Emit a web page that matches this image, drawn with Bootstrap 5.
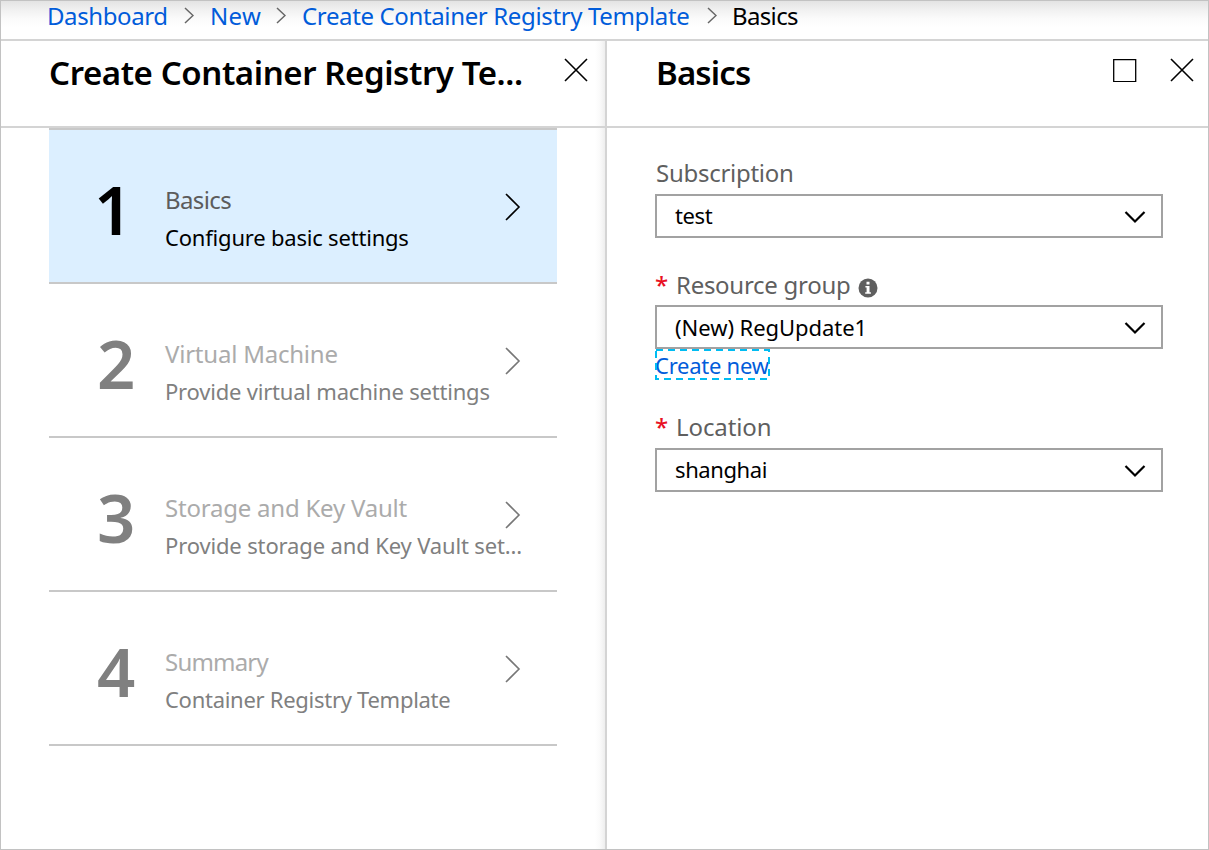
<!DOCTYPE html>
<html lang="en">
<head>
<meta charset="utf-8">
<meta name="viewport" content="width=device-width, initial-scale=1">
<title>Create Container Registry Template</title>
<link rel="stylesheet" href="https://cdn.jsdelivr.net/npm/bootstrap@5.3.0/dist/css/bootstrap.min.css">
<style>
body{font-family:"Noto Sans",sans-serif;color:#000;background:#fff}
svg{display:block;flex:none;fill:none;stroke:#000}
a,a:hover{color:#015cda;text-decoration:none}
.portal{height:850px;border:1px solid #c2c2c2}
.crumbs{height:40px;border-bottom:2px solid #d4d4d4;padding-left:46px;font-size:24px;line-height:30px;letter-spacing:-.36px;background:linear-gradient(#e3e3e3 0,#f1f1f1 9px,#fbfbfb 18px,#fff 27px)}
.crumbs svg{margin-top:6px;stroke:#666}
.crumb-first{width:137px;letter-spacing:-.4px}
.crumb-new{width:66px;margin-left:16px;letter-spacing:.3px}
.crumb-template{width:405px;margin-left:16px}
.crumb-last{margin-left:15px;letter-spacing:-.65px}
.blade-left{width:606px;border-right:2px solid #d4d4d4;background:linear-gradient(to left,#eee 0,#fafafa 5px,#fff 10px)}
.blade-head{height:87px;border-bottom:2px solid #d4d4d4}
.blade-head h1,.blade-head h2{font-size:33px;font-weight:600;line-height:44px;margin-top:10px;letter-spacing:-.42px}
.blade-head h1{width:476px;margin-left:48px}
.blade-head h2{margin-left:49px;letter-spacing:-.85px}
.blade-head svg{margin-top:17px;stroke-width:1.6}
.steps{width:508px;margin-left:48px;border-top:2px solid #c8c8c8}
.step{height:154px;border-bottom:2px solid #c8c8c8;color:#808080}
.step svg{margin:63px 35px 0 0;stroke:#777;stroke-width:1.6}
.step-no{width:68px;margin:39px 0 0 48px;font-size:67px;font-weight:600;line-height:80px}
.step-text{width:357px;margin-top:54px}
.step-title{font-size:24px;line-height:32px;letter-spacing:-.22px;color:#ababab;margin-bottom:5px}
.step-sub{font-size:22px;line-height:33px;letter-spacing:-.2px;white-space:nowrap}
.step-arrow{width:0;margin-left:-17px}
.step.current{background:#dcefff;color:#000}
.step.current .step-no{text-indent:-3px}
.step.current .step-title{color:#5c5c5c;letter-spacing:-.6px}
.step.current svg{stroke:#000}
.fields{padding:29px 45px 0 48px}
.field-label{height:32px;font-size:24px;line-height:32px;letter-spacing:-.28px;color:#5f5f5f;white-space:pre}
.required{width:21px;color:#e81123;font-weight:500}
.picker{height:44px;border:2px solid #a2a2a2;padding:0 15px 0 18px;font-size:22px;line-height:38px;letter-spacing:-.4px}
.picker > span{height:40px}
.picker svg{stroke-width:2.2;margin-top:1px}
.create-link{display:block;width:115px;height:32px;font-size:22px;line-height:32px;letter-spacing:-.25px;white-space:nowrap}
.create-box{width:114px;position:relative}
.create-box svg{position:absolute;left:0;top:0;stroke:#00bcf2;stroke-width:2}
</style>
</head>
<body>
<div class="portal d-flex flex-column overflow-hidden">
  <nav class="crumbs d-flex flex-shrink-0 text-nowrap">
    <a class="crumb-first" href="#">Dashboard</a>
    <svg width="10" height="17"><path d="M1 1l8 7.500L1 16" stroke-width="1.5"/></svg>
    <a class="crumb-new" href="#">New</a>
    <svg width="10" height="17"><path d="M1 1l8 7.500L1 16" stroke-width="1.5"/></svg>
    <a class="crumb-template" href="#">Create Container Registry Template</a>
    <svg width="10" height="17"><path d="M1 1l8 7.500L1 16" stroke-width="1.5"/></svg>
    <span class="crumb-last">Basics</span>
  </nav>
  <main class="d-flex flex-grow-1">
    <section class="blade-left flex-shrink-0">
      <header class="blade-head d-flex align-items-start">
        <h1 class="mb-0 text-nowrap">Create Container Registry Te...</h1>
        <svg class="ms-auto" style="margin-right:17px" width="24" height="24"><path d="M1 1l22 22M23 1L1 23"/></svg>
      </header>
      <div class="steps">
        <div class="step current d-flex align-items-start">
          <div class="step-no">1</div>
          <div class="step-text"><div class="step-title">Basics</div><div class="step-sub">Configure basic settings</div></div>
          <div class="step-arrow"><svg width="16" height="28"><path d="M1 1l13 13L1 27"/></svg></div>
        </div>
        <div class="step d-flex align-items-start">
          <div class="step-no">2</div>
          <div class="step-text"><div class="step-title">Virtual Machine</div><div class="step-sub">Provide virtual machine settings</div></div>
          <div class="step-arrow"><svg width="16" height="28"><path d="M1 1l13 13L1 27"/></svg></div>
        </div>
        <div class="step d-flex align-items-start">
          <div class="step-no">3</div>
          <div class="step-text"><div class="step-title">Storage and Key Vault</div><div class="step-sub" style="letter-spacing:-.14px">Provide storage and Key Vault set...</div></div>
          <div class="step-arrow"><svg width="16" height="28"><path d="M1 1l13 13L1 27"/></svg></div>
        </div>
        <div class="step d-flex align-items-start">
          <div class="step-no">4</div>
          <div class="step-text"><div class="step-title" style="letter-spacing:-.8px">Summary</div><div class="step-sub" style="letter-spacing:-.28px">Container Registry Template</div></div>
          <div class="step-arrow"><svg width="16" height="28"><path d="M1 1l13 13L1 27"/></svg></div>
        </div>
      </div>
    </section>
    <section class="flex-grow-1">
      <header class="blade-head d-flex align-items-start">
        <h2 class="mb-0">Basics</h2>
        <svg class="ms-auto" width="24" height="24"><path stroke-width="1.3" d="M.700 1.600h22v22h-22z"/></svg>
        <svg style="margin-left:33px;margin-right:14px" width="24" height="24"><path d="M1 1l22 22M23 1L1 23"/></svg>
      </header>
      <form class="fields">
        <div class="field-label" style="text-indent:1px">Subscription</div>
        <div class="picker d-flex align-items-center justify-content-between" style="margin:5px 0 31px"><span>test</span>
          <svg width="22" height="14"><path d="M1.500 2l9.500 9.500L20.500 2"/></svg></div>
        <div class="field-label d-flex"><span class="required">*</span><span>Resource group</span>
          <svg style="margin:9px 0 0 8px" width="20" height="20"><circle cx="10" cy="10" r="9.500" fill="#5f5f5f" stroke="none"/><path d="M8.500 3.700h3v2.700h-3zM7.400 8h4.100v6.200h1.400v1.600H7.200v-1.600h1.400V9.600H7.400z" fill="#fff" stroke="none"/></svg></div>
        <div class="picker d-flex align-items-center justify-content-between" style="margin-top:4px;letter-spacing:-.05px"><span style="line-height:40px">(New) RegUpdate1</span>
          <svg width="22" height="14"><path d="M1.500 2l9.500 9.500L20.500 2"/></svg></div>
        <div class="create-box"><a class="create-link" href="#">Create new</a>
          <svg width="115" height="32"><path d="M1 1h113v29H1z" stroke-dasharray="7 5"/></svg></div>
        <div class="field-label d-flex" style="margin-top:30px;letter-spacing:-.1px"><span class="required">*</span><span>Location</span></div>
        <div class="picker d-flex align-items-center justify-content-between" style="margin-top:5px"><span>shanghai</span>
          <svg width="22" height="14"><path d="M1.500 2l9.500 9.500L20.500 2"/></svg></div>
      </form>
    </section>
  </main>
</div>
<script src="https://cdn.jsdelivr.net/npm/bootstrap@5.3.0/dist/js/bootstrap.bundle.min.js"></script>
</body>
</html>
